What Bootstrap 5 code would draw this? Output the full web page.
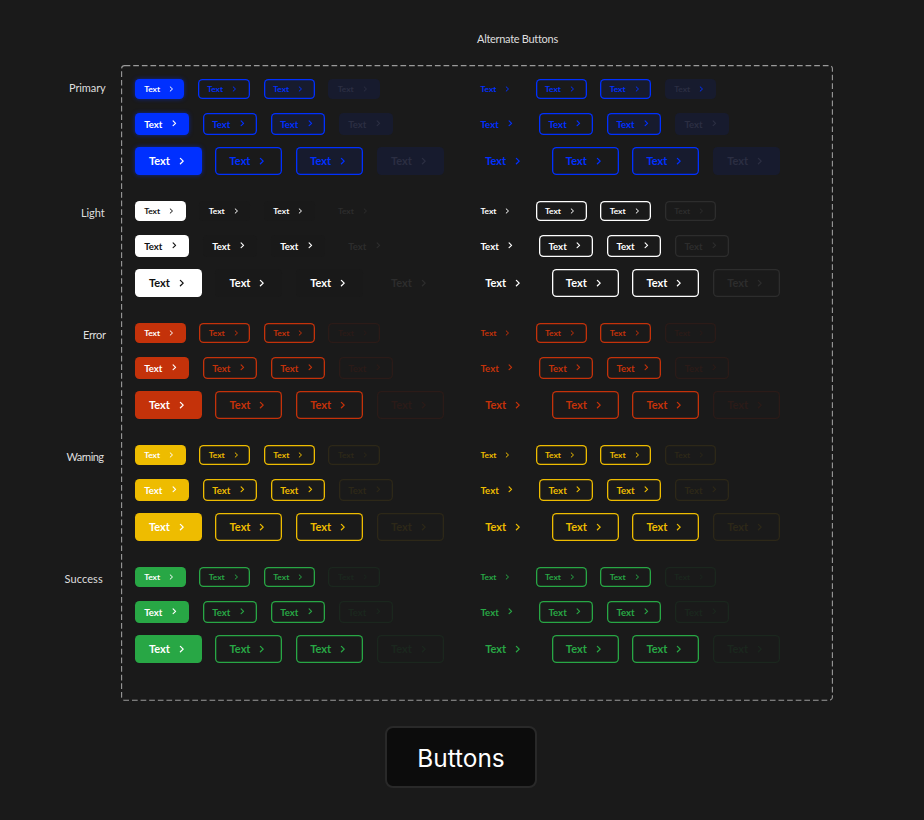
<!DOCTYPE html>
<html lang="en">
<head>
<meta charset="utf-8">
<meta name="viewport" content="width=device-width, initial-scale=1">
<title>Buttons</title>
<link href="https://cdn.jsdelivr.net/npm/bootstrap@5.3.0/dist/css/bootstrap.min.css" rel="stylesheet">
<style>
body{background:#1a1a1a;width:924px;height:820px;overflow:hidden;font-family:Lato,"Open Sans",sans-serif}
.topline{height:65.3px;padding:31px 0 0 477px;line-height:15px}
.caption{color:#dedede;font-size:11px;letter-spacing:-.3px;white-space:nowrap}
.names{width:121px;padding-top:14px}
.names .caption{height:122px;line-height:18px;letter-spacing:-.1px}
.names .from-64{padding:3px 0 0 64.5px;letter-spacing:.1px}
.names .from-66{padding:3px 0 0 66.5px;letter-spacing:-.55px}
.names .from-69{padding-left:69px}
.names .from-81{padding:3px 0 0 81px}
.names .from-83{padding:3px 0 0 83px;letter-spacing:-.3px}
.frame{width:712px;height:636px;padding:14px 0 0 13.7px}
.outline{left:0;top:0;pointer-events:none}
.family{height:122px}
.half{width:336.3px}
.line-sm{height:34px}.line-md{height:34.2px}.line-lg{height:28px}
.chip{--c:#fff;background:transparent;border:0;border-radius:4.5px;padding:0;line-height:1;font-weight:700;color:var(--c);white-space:nowrap}
.chip span{display:block}
.chip svg{display:block;fill:none;stroke:currentColor;stroke-linecap:round;stroke-linejoin:round}
.chip-sm{width:51.2px;height:20px;margin-right:13.4px;padding-left:9.5px;font-size:8.4px}
.chip-sm span{width:25px}
.chip-md{width:54.4px;height:21.3px;margin-right:13.6px;padding-left:9.5px;font-size:9.6px}
.chip-md span{width:27.9px;padding-top:1.2px}
.chip-lg{width:67px;height:28px;margin-right:13.7px;padding-left:14.2px;font-size:11px}
.chip-lg span{width:29.9px;padding-bottom:1.2px}
.chip-narrow{width:49.7px;margin-right:13.3px}
.chip-wide{width:52.7px}
.blue{--c:#0030ff}.red{--c:#c4320a}.gold{--c:#eebc00}.green{--c:#28a745}
.solid{background:var(--c);color:#fff}
.white.solid{color:#111}
.blue.solid{box-shadow:0 0 4px rgba(0,48,255,.55)}
.lined{box-shadow:inset 0 0 0 1.3px var(--c)}
.tint{background:#171b2e}
.soft{background:#191919}
.blue.off{background:#171b2e;color:#2b2e42}
.white.off{--c:#2d2d2d}.red.off{--c:#2b1b18}.gold.off{--c:#2d2818}.green.off{--c:#1b271e}
.accent svg{color:#0030ff}
.sheet-title{width:152px;height:62px;margin:25px 0 0 385px;padding:2px 0 0;background:#0c0c0c;border:2px solid #292929;border-radius:8px;color:#fff;font:400 24.4px/1 Inter,sans-serif}
</style>
</head>
<body>
<header class="topline"><div class="caption">Alternate Buttons</div></header>
<main class="d-flex">
  <div class="names flex-shrink-0">
    <div class="caption from-69">Primary</div>
    <div class="caption from-81">Light</div>
    <div class="caption from-83">Error</div>
    <div class="caption from-66">Warning</div>
    <div class="caption from-64">Success</div>
  </div>
  <section class="frame position-relative flex-shrink-0">
    <svg class="outline position-absolute" width="712" height="636"><rect x=".6" y=".6" width="710.8" height="634.6" rx="3" fill="none" stroke="#9a9a9a" stroke-width="1.1" stroke-dasharray="5.7 2.92"/></svg>
    <div id="families"></div>
  </section>
</main>
<button class="sheet-title d-flex align-items-center justify-content-center">Buttons</button>
<script src="https://cdn.jsdelivr.net/npm/bootstrap@5.3.0/dist/js/bootstrap.bundle.min.js"></script>
<script>
// chevron geometry per size: width, height, path, stroke
const arrows={
  sm:'<svg width="5" height="6" stroke-width="1"><path d="M1.2 .9L3.5 3L1.2 5.1"/></svg>',
  md:'<svg width="5" height="7" stroke-width="1.15"><path d="M1.1 .9L3.6 3.3L1.1 5.7"/></svg>',
  lg:'<svg width="6" height="8" stroke-width="1.3"><path d="M1.4 1.4L4.2 4.1L1.4 6.8"/></svg>'};
const chip=(size,cls)=>`<button class="chip chip-${size} ${cls} d-flex align-items-center flex-shrink-0 text-start"><span>Text</span>${arrows[size]}</button>`;
const html=['blue','white','red','gold','green'].map(color=>{
  const lines=['sm','md','lg'].map(size=>{
    const blue=color==='blue',white=color==='white',small=size==='sm';
    const main=[
      `${color} solid${blue&&small?' chip-narrow':''}`,
      `${color} ${white?'soft':'lined'}${blue&&small?' chip-wide':''}`,
      `${color} ${white?'soft':'lined'}${blue?' tint':''}`,
      `${color} off ${blue||white?'':'lined'}`];
    const alternate=[
      color,
      `${color} lined`,
      `${color} lined${blue?' tint':''}`,
      `${color} off ${blue?(small?'accent':''):'lined'}`];
    const half=list=>`<div class="half d-flex align-items-start">${list.map(c=>chip(size,c)).join('')}</div>`;
    return `<div class="line-${size} d-flex">${half(main)}${half(alternate)}</div>`;
  });
  return `<div class="family">${lines.join('')}</div>`;
}).join('');
document.getElementById('families').innerHTML=html;
</script>
</body>
</html>
